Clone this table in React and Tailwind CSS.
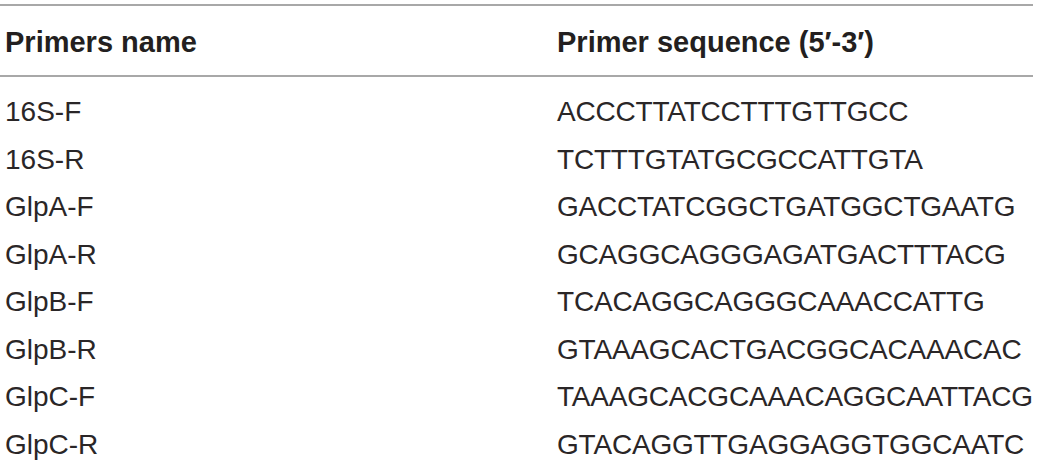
import React from 'react'

const rows = [
  ["16S-F", "ACCCTTATCCTTTGTTGCC"],
  ["16S-R", "TCTTTGTATGCGCCATTGTA"],
  ["GlpA-F", "GACCTATCGGCTGATGGCTGAATG"],
  ["GlpA-R", "GCAGGCAGGGAGATGACTTTACG"],
  ["GlpB-F", "TCACAGGCAGGGCAAACCATTG"],
  ["GlpB-R", "GTAAAGCACTGACGGCACAAACAC"],
  ["GlpC-F", "TAAAGCACGCAAACAGGCAATTACG"],
  ["GlpC-R", "GTACAGGTTGAGGAGGTGGCAATC"],
]

const App = () => {
  return (
    <div className="w-[1039px] h-[465px] bg-white pt-[4px] overflow-hidden text-[#231f20]" style={{ fontFamily: '"Liberation Sans", Arial, sans-serif' }}>
      <div className="w-[1033px]">
        <div className="grid grid-cols-[552px_1fr] border-t-2 border-b-2 border-[#a8a8a8] pt-[19px] pb-[16px] text-[29px] leading-[34px] font-bold">
          <div className="pl-[5px]">Primers name</div>
          <div className="pl-[5px]">Primer sequence (5′-3′)</div>
        </div>
        <div className="pt-[11px]">
          {rows.map(([name, seq]) => (
            <div key={name} className="grid grid-cols-[552px_1fr] h-[47.5px] text-[28px] leading-[47.5px] text-[#2a2627]">
              <div className="pl-[5px]">{name}</div>
              <div className="pl-[5px] tracking-[-0.2px]">{seq}</div>
            </div>
          ))}
        </div>
      </div>
    </div>
  )
}

export default App
